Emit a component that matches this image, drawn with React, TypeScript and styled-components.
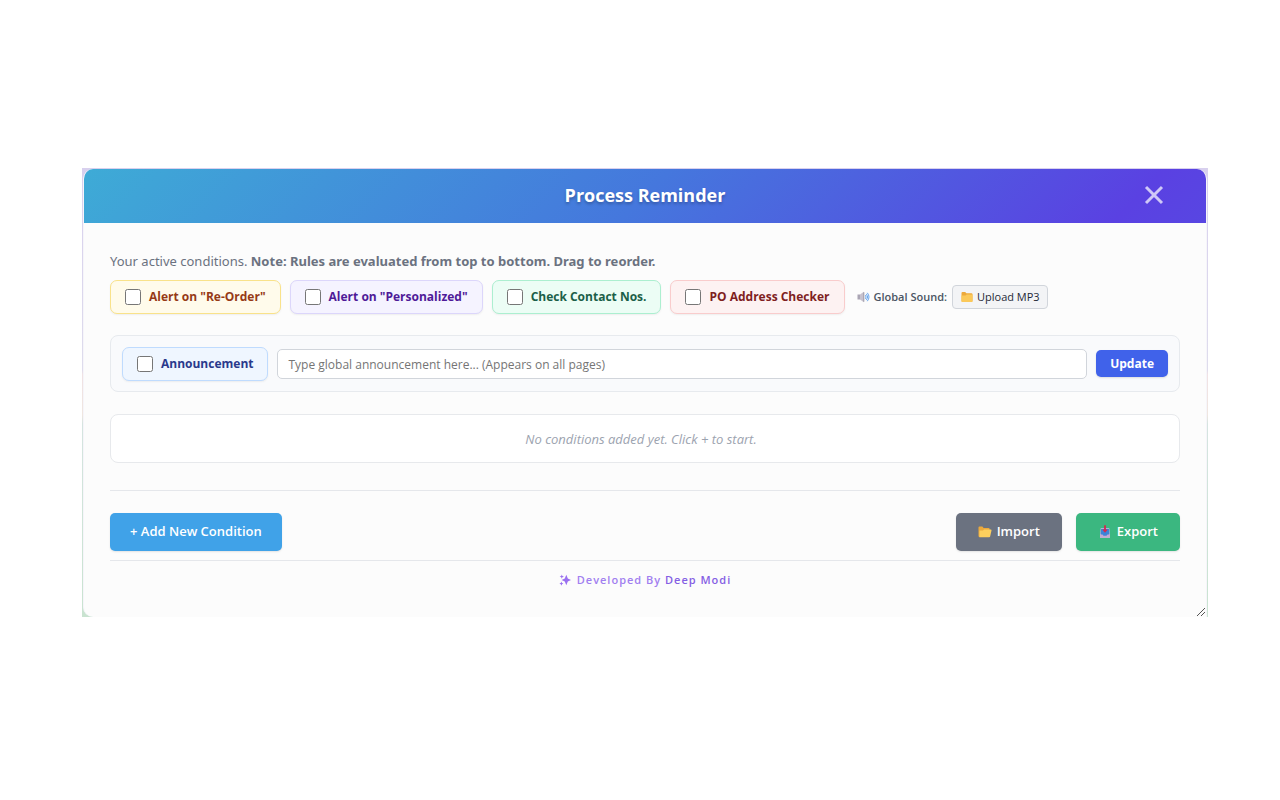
import React from "react";
import styled, { createGlobalStyle } from "styled-components";

const GlobalStyle = createGlobalStyle`
  *, *::before, *::after { box-sizing: border-box; }
  body {
    margin: 0;
    background: #ffffff;
    font-family: "Open Sans", "Noto Sans", sans-serif;
    font-size: 13px;
    line-height: 18px;
  }
  button, input { font-family: inherit; }
`;

const Page = styled.main`
  padding: 168px 72px 40px 82px;
`;

const Backdrop = styled.div`
  padding: 1px 1px 0;
  background: linear-gradient(#d8d0ee 0, #dedcec 45%, #f0e2e4 46%, #efe6e0 55%, #d5e4e0 57%, #c9e3d0 100%);
`;

const Dialog = styled.section`
  position: relative;
  border: solid #f6f5fa;
  border-width: 0 1px;
  border-radius: 10px 10px 0 10px;
  overflow: hidden;
  background: #fcfcfc;
`;

const Header = styled.header`
  display: grid;
  grid-template-columns: 1fr auto 1fr;
  align-items: center;
  height: 54px;
  padding: 0 40px 2px;
  background: linear-gradient(135deg, #3eabd6 0%, #4577dd 50%, #5a41e2 92%, #5846e2 100%);
`;

const Title = styled.h1`
  grid-column: 2;
  margin: 0;
  color: #ffffff;
  font-size: 18px;
  font-weight: 700;
  line-height: 24px;
  text-shadow: 0 2px 3px rgba(0, 0, 0, 0.25);
`;

const CloseButton = styled.button`
  display: flex;
  justify-self: end;
  padding: 0;
  border: 0;
  background: none;
  color: #cfc8f7;
  cursor: pointer;
`;

const Body = styled.div`
  padding: 29px 26px 28px;
`;

const Intro = styled.p`
  margin: 0 0 10px;
  color: #6b7280;
  font-family: "Noto Sans", sans-serif;
  font-size: 13px;
  line-height: 18px;
`;

const ChipRow = styled.div`
  display: flex;
  flex-wrap: wrap;
  align-items: center;
  gap: 9px;
`;

type Tone = "amber" | "violet" | "green" | "red" | "blue";

const tones: Record<Tone, { fill: string; line: string; ink: string }> = {
  amber: { fill: "#fffbeb", line: "#f9e28a", ink: "#963a16" },
  violet: { fill: "#f5f3ff", line: "#dcd6fb", ink: "#4f1a98" },
  green: { fill: "#ecfdf5", line: "#acefd0", ink: "#1b5f48" },
  red: { fill: "#fdf2f2", line: "#f9cccc", ink: "#7f1f1f" },
  blue: { fill: "#eff6ff", line: "#bfdbfe", ink: "#2a398c" },
};

const Chip = styled.label<{ $tone: Tone }>`
  display: flex;
  align-items: center;
  gap: 8px;
  height: 34px;
  padding: 0 14px;
  border: 1px solid ${(p) => tones[p.$tone].line};
  border-radius: 7px;
  background: ${(p) => tones[p.$tone].fill};
  color: ${(p) => tones[p.$tone].ink};
  box-shadow: 0 1px 2px rgba(0, 0, 0, 0.06);
  font-size: 12px;
  font-weight: 700;
  line-height: 20px;
  white-space: nowrap;
  cursor: pointer;
`;

const Checkbox = styled.input`
  width: 16px;
  height: 16px;
  margin: 0;
`;

const Sound = styled.div`
  display: flex;
  align-items: center;
  gap: 4px;
  margin-left: 3px;
  color: #4b5563;
  font-size: 11px;
  font-weight: 600;
  white-space: nowrap;
`;

const UploadButton = styled.button`
  display: flex;
  align-items: center;
  gap: 4px;
  height: 24px;
  margin-left: 1px;
  padding: 0 7px 1px 8px;
  border: 1px solid #d1d5db;
  border-radius: 4px;
  background: #f3f4f6;
  color: #1f2937;
  font-size: 11px;
  font-weight: 500;
  cursor: pointer;
`;

const Announcement = styled.form`
  display: flex;
  align-items: center;
  gap: 9px;
  height: 57px;
  margin-top: 21px;
  padding: 0 11px;
  border: 1px solid #e7eaee;
  border-radius: 8px;
  background: #f9fafc;
`;

const TextField = styled.input`
  flex: 1;
  min-width: 0;
  height: 30px;
  padding: 1px 10px 0;
  border: 1px solid #d1d5db;
  border-radius: 5px;
  background: #ffffff;
  font-size: 12px;
  &::placeholder { color: #757575; }
`;

const UpdateButton = styled.button`
  height: 27px;
  padding: 0 14px;
  border: 0;
  border-radius: 5px;
  background: #4062ea;
  color: #ffffff;
  box-shadow: 0 1px 2px rgba(0, 0, 0, 0.12);
  font-size: 12px;
  font-weight: 700;
  cursor: pointer;
`;

const EmptyState = styled.p`
  display: flex;
  align-items: center;
  justify-content: center;
  height: 49px;
  margin: 22px 0 27px;
  padding-right: 8px;
  border: 1px solid #e7e9ec;
  border-radius: 8px;
  background: #ffffff;
  color: #9ca3af;
  font-size: 13px;
  font-style: italic;
`;

const Actions = styled.div`
  display: flex;
  flex-wrap: wrap;
  gap: 14px;
  padding: 22px 0 9px;
  border-top: 1px solid #e5e7eb;
`;

const ActionButton = styled.button<{ $color: string }>`
  display: flex;
  align-items: center;
  gap: 5px;
  height: 38px;
  padding: 0 22px 2px;
  border: 0;
  border-radius: 5px;
  background: ${(p) => p.$color};
  color: #ffffff;
  box-shadow: 0 1px 2px rgba(0, 0, 0, 0.1);
  font-size: 13px;
  font-weight: 600;
  cursor: pointer;
  &:first-child {
    margin-right: auto;
    padding: 0 20px 2px;
  }
  svg { margin-top: 2px; }
`;

const Credit = styled.footer`
  display: flex;
  align-items: center;
  justify-content: center;
  gap: 6px;
  padding-top: 10px;
  border-top: 1px solid #e5e7eb;
  color: #a17ff0;
  font-size: 11px;
  font-weight: 600;
  letter-spacing: 1px;
  strong { color: #855fe4; font-weight: 600; }
`;

const Grip = styled.svg`
  position: absolute;
  right: 0;
  bottom: 0;
`;

const SpeakerIcon = () => (
  <svg width="13" height="12" viewBox="0 0 13 12" aria-hidden="true">
    <path d="M0.5 3.5h2.5v5H0.5z" fill="#aaa5b4" />
    <path d="M3 3.5L6.8 0.8v10.4L3 8.5z" fill="#c7c2ce" />
    <path d="M6.3 1.2h1v9.6h-1z" fill="#9c98a6" />
    <path d="M8.4 4.2q1.4 1.8 0 3.6M9.4 2.9q2.6 3.1 0 6.2M10.3 1.8q3.4 4.2 0 8.4" fill="none" stroke="#69a7ee" strokeWidth="1" />
  </svg>
);

const FolderIcon = () => (
  <svg width="12" height="10" viewBox="0 0 12 10" aria-hidden="true">
    <path d="M0.5 1Q0.5 0 1.5 0h2.7l1.2 1.3h5Q11.5 1.3 11.5 2.3V9q0 1-1 1h-9q-1 0-1-1z" fill="#eda93b" />
    <path d="M0.5 3.4h4l1.2-1h5.8V9q0 1-1 1h-9q-1 0-1-1z" fill="#fbc95a" />
  </svg>
);

const OpenFolderIcon = () => (
  <svg width="14" height="12" viewBox="0 0 14 12" aria-hidden="true">
    <path d="M0.5 1.4Q0.5 0.5 1.4 0.5h3L5.6 2h5q1 0 1 1v8H1.4q-0.9 0-0.9-0.9z" fill="#eba93c" />
    <path d="M1.5 4.4l3.5 0 1-0.9h6.8q0.9 0 0.7 0.9l-1.3 5.9q-0.2 0.9-1.1 0.9H1.4z" fill="#fdd05e" />
  </svg>
);

const OutboxIcon = () => (
  <svg width="14" height="14" viewBox="0 0 14 14" aria-hidden="true">
    <path d="M2.8 3h8.4L12 9.5v3.3H2V9.5z" fill="#cfc3dd" />
    <path d="M3 3.8h8l0.5 5.7L9 11H5L2.5 9.5z" fill="#3d83d8" />
    <path d="M2 9.5h2.5l1 1.3h3l1-1.3H12v3.3H2z" fill="#c3abd2" />
    <path d="M6.1 0.3h1.8v4.2h1.9L7 7.8 4.2 4.5h1.9z" fill="#d3284f" />
  </svg>
);

const SparkleIcon = () => (
  <svg width="12" height="12" viewBox="0 0 12 12" fill="#9a70f0" aria-hidden="true">
    <path d="M7.3 0.8L8.8 4.5 12 6 8.8 7.5 7.3 11.2 5.8 7.5 2.6 6 5.8 4.5z" />
    <path d="M2.8 0.4L3.4 2 5 2.6 3.4 3.2 2.8 4.8 2.2 3.2 0.6 2.6 2.2 2z" />
    <path d="M2.4 7.4L3 9 4.4 9.6 3 10.2 2.4 11.8 1.8 10.2 0.4 9.6 1.8 9z" />
  </svg>
);

const alerts: { label: string; tone: Tone }[] = [
  { label: 'Alert on "Re-Order"', tone: "amber" },
  { label: 'Alert on "Personalized"', tone: "violet" },
  { label: "Check Contact Nos.", tone: "green" },
  { label: "PO Address Checker", tone: "red" },
];

export default function App() {
  return (
    <Page>
      <GlobalStyle />
      <Backdrop>
        <Dialog role="dialog" aria-labelledby="dialog-title">
          <Header>
            <Title id="dialog-title">Process Reminder</Title>
            <CloseButton type="button" aria-label="Close">
              <svg width="24" height="24" viewBox="0 0 24 24" aria-hidden="true">
                <path d="M4 4L20 20M20 4L4 20" stroke="currentColor" strokeWidth="3" />
              </svg>
            </CloseButton>
          </Header>
          <Body>
            <Intro>
              Your active conditions.{" "}
              <strong>Note: Rules are evaluated from top to bottom. Drag to reorder.</strong>
            </Intro>
            <ChipRow>
              {alerts.map((a) => (
                <Chip key={a.label} $tone={a.tone}>
                  <Checkbox type="checkbox" />
                  {a.label}
                </Chip>
              ))}
              <Sound>
                <SpeakerIcon />
                Global Sound:
                <UploadButton type="button">
                  <FolderIcon />
                  Upload MP3
                </UploadButton>
              </Sound>
            </ChipRow>
            <Announcement onSubmit={(e) => e.preventDefault()}>
              <Chip $tone="blue">
                <Checkbox type="checkbox" />
                Announcement
              </Chip>
              <TextField
                type="text"
                aria-label="Global announcement"
                placeholder="Type global announcement here... (Appears on all pages)"
              />
              <UpdateButton type="submit">Update</UpdateButton>
            </Announcement>
            <EmptyState>No conditions added yet. Click + to start.</EmptyState>
            <Actions>
              <ActionButton type="button" $color="#40a2e8">+ Add New Condition</ActionButton>
              <ActionButton type="button" $color="#6b7280">
                <OpenFolderIcon />
                Import
              </ActionButton>
              <ActionButton type="button" $color="#3bb780">
                <OutboxIcon />
                Export
              </ActionButton>
            </Actions>
            <Credit>
              <SparkleIcon />
              <span>Developed By <strong>Deep Modi</strong></span>
            </Credit>
          </Body>
          <Grip width="10" height="10" viewBox="0 0 10 10" aria-hidden="true">
            <path d="M1 9L9 1M5 9L9 5" stroke="#555" strokeWidth="1" />
          </Grip>
        </Dialog>
      </Backdrop>
    </Page>
  );
}
